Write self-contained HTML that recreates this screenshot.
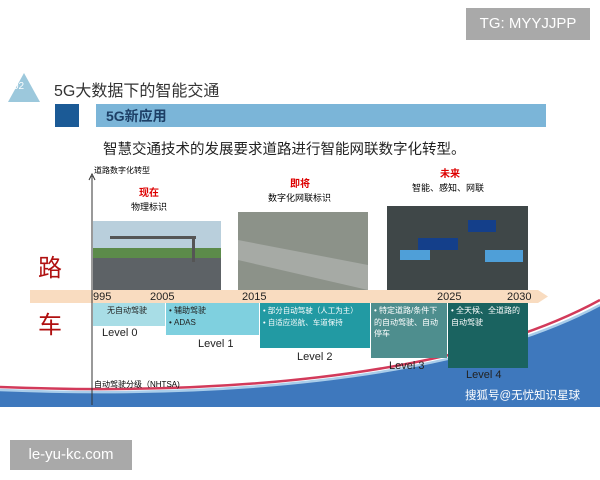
<!DOCTYPE html>
<html><head><meta charset="utf-8"><style>
*{margin:0;padding:0;box-sizing:border-box}
body{width:600px;height:480px;background:#fff;position:relative;overflow:hidden;font-family:"Liberation Sans","Noto Sans CJK SC",sans-serif}
.a{position:absolute}
.cn{font-family:"Liberation Sans","Noto Sans CJK SC",sans-serif}
.yr{font-size:11px;color:#222;top:291px}
.lv{font-size:11px;color:#222}
.box{position:absolute;top:303px;color:#fff;font-size:8px;line-height:11.5px;padding:2px 3px;white-space:normal}
</style></head><body>
<svg class="a" style="left:0;top:0" width="600" height="410">
<path d="M0 390 C200 398 450 385 600 305 L600 407 L0 407 Z" fill="#3e78bd"/>
<path d="M0 384 C200 392 450 379 600 297" stroke="#fff" stroke-width="3" fill="none"/>
<path d="M0 387 C200 395 450 382 600 300" stroke="#d23a5a" stroke-width="2.5" fill="none"/>
<path d="M0 390 C200 398 450 385 600 305" stroke="#a9cdea" stroke-width="2.5" fill="none"/>
<polygon points="24,73 40,102 8,102" fill="#9cc8dc"/>
<rect x="55" y="104" width="24" height="23" fill="#1b5a96"/>
<rect x="96" y="104" width="450" height="23" fill="#7bb5d8"/>
<path d="M30 290 L538 290 L548 296.5 L538 303 L30 303 Z" fill="#f9dcc0"/>
<line x1="92" y1="176" x2="92" y2="405" stroke="#333" stroke-width="1"/>
<path d="M89 180 L92 174 L95 180" fill="none" stroke="#333"/>
<rect x="93" y="221" width="128" height="69" fill="#b9cfdc"/>
<rect x="93" y="255" width="128" height="35" fill="#5d6266"/>
<rect x="93" y="248" width="128" height="10" fill="#5c8b4a"/>
<rect x="110" y="236" width="86" height="3" fill="#555"/>
<rect x="192" y="236" width="3" height="26" fill="#555"/>
<rect x="238" y="212" width="130" height="78" fill="#8c9289"/>
<path d="M238 240 L368 265 L368 290 L238 260Z" fill="#a6aaa5"/>
<rect x="387" y="206" width="141" height="84" fill="#3f4748"/>
<rect x="400" y="250" width="30" height="10" fill="#4f9fd8"/>
<rect x="418" y="238" width="40" height="12" fill="#143f8a"/>
<rect x="468" y="220" width="28" height="12" fill="#143f8a"/>
<rect x="485" y="250" width="38" height="12" fill="#4f9fd8"/>
</svg>
<div class="a" style="left:466px;top:8px;width:124px;height:32px;background:#a9a9a9;color:#fff;font-size:15px;line-height:32px;text-align:center">TG: MYYJJPP</div>
<div class="a" style="left:13px;top:81px;color:#fff;font-size:10px">02</div>
<div class="a cn" style="left:54px;top:77px;font-size:16px;color:#333">5G大数据下的智能交通</div>
<div class="a cn" style="left:106px;top:106px;font-size:14px;font-weight:bold;color:#1d3f66">5G新应用</div>
<div class="a cn" style="left:103px;top:138px;font-size:14.5px;color:#222">智慧交通技术的发展要求道路进行智能网联数字化转型。</div>
<div class="a cn" style="left:94px;top:165px;font-size:8px">道路数字化转型</div>
<div class="a cn" style="left:139px;top:184px;font-size:10px;color:#d00;font-weight:bold">现在</div>
<div class="a cn" style="left:131px;top:200px;font-size:9px">物理标识</div>
<div class="a cn" style="left:290px;top:175px;font-size:10px;color:#d00;font-weight:bold">即将</div>
<div class="a cn" style="left:268px;top:191px;font-size:9px">数字化网联标识</div>
<div class="a cn" style="left:440px;top:165px;font-size:10px;color:#d00;font-weight:bold">未来</div>
<div class="a cn" style="left:412px;top:181px;font-size:9px">智能、感知、网联</div>
<div class="a cn" style="left:38px;top:248px;font-size:24px;color:#b01010">路</div>
<div class="a cn" style="left:38px;top:305px;font-size:24px;color:#b01010">车</div>
<div class="a yr" style="left:93px">995</div>
<div class="a yr" style="left:150px">2005</div>
<div class="a yr" style="left:242px">2015</div>
<div class="a yr" style="left:437px">2025</div>
<div class="a yr" style="left:507px">2030</div>
<div class="box cn" style="left:93px;width:72px;height:23px;background:#a8dde6;color:#222;padding-left:14px">无自动驾驶</div>
<div class="box cn" style="left:166px;width:93px;height:32px;background:#7fd0df;color:#222">• 辅助驾驶<br>• ADAS</div>
<div class="box cn" style="left:260px;width:110px;height:45px;background:#229aa3;white-space:nowrap;font-size:7.5px">• 部分自动驾驶（人工为主）<br>• 自适应巡航、车道保持</div>
<div class="box cn" style="left:371px;width:76px;height:55px;background:#4e8e8e">• 特定道路/条件下的自动驾驶、自动停车</div>
<div class="box cn" style="left:448px;width:80px;height:65px;background:#1a6360">• 全天候、全道路的自动驾驶</div>
<div class="a lv" style="left:102px;top:327px">Level 0</div>
<div class="a lv" style="left:198px;top:338px">Level 1</div>
<div class="a lv" style="left:297px;top:351px">Level 2</div>
<div class="a lv" style="left:389px;top:360px">Level 3</div>
<div class="a lv" style="left:466px;top:369px">Level 4</div>
<div class="a cn" style="left:94px;top:379px;font-size:8px">自动驾驶分级（NHTSA)</div>
<div class="a cn" style="left:465px;top:387px;font-size:11.5px;color:#fff">搜狐号@无忧知识星球</div>
<div class="a" style="left:10px;top:440px;width:122px;height:30px;background:#a9a9a9;color:#fff;font-size:15px;line-height:30px;text-align:center">le-yu-kc.com</div>
</body></html>
